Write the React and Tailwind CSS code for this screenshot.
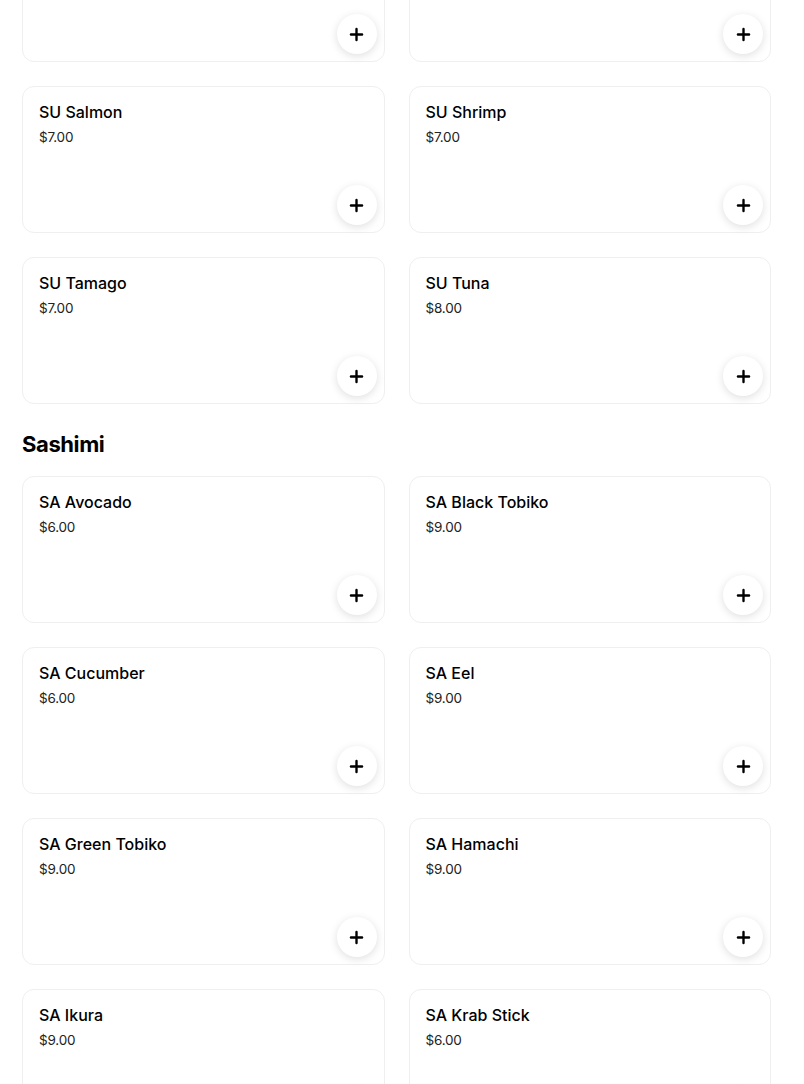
import { Plus } from 'lucide-react';

const sushi = [
    { name: 'SU Octopus', price: '$7.00' },
    { name: 'SU Red Tobiko', price: '$7.00' },
    { name: 'SU Salmon', price: '$7.00' },
    { name: 'SU Shrimp', price: '$7.00' },
    { name: 'SU Tamago', price: '$7.00' },
    { name: 'SU Tuna', price: '$8.00' },
];

const sashimi = [
    { name: 'SA Avocado', price: '$6.00' },
    { name: 'SA Black Tobiko', price: '$9.00' },
    { name: 'SA Cucumber', price: '$6.00' },
    { name: 'SA Eel', price: '$9.00' },
    { name: 'SA Green Tobiko', price: '$9.00' },
    { name: 'SA Hamachi', price: '$9.00' },
    { name: 'SA Ikura', price: '$9.00' },
    { name: 'SA Krab Stick', price: '$6.00' },
];

const ItemCard = ({ item }) => (
    <div className="h-[147px] flex flex-col rounded-xl border border-[#efefef] bg-white pl-4 pt-[15px] pr-[7px] pb-[7px]">
        <div className="text-[16px] leading-[20px] font-medium text-black">{item.name}</div>
        <div className="mt-[5px] text-[13.5px] leading-[20px] text-[#222] tracking-[-0.2px]">{item.price}</div>
        <button className="mt-auto self-end w-10 h-10 rounded-full bg-white flex items-center justify-center shadow-[0_2px_8px_rgba(0,0,0,0.13)]">
            <Plus size={19} strokeWidth={3} color="#000" />
        </button>
    </div>
);

const App = () => {
    return (
        <div className="bg-white min-h-screen overflow-hidden" style={{ fontFamily: 'Inter, "Liberation Sans", sans-serif' }}>
            <div className="pl-[22px] pr-[33px] -mt-[85px]">
                <div className="grid grid-cols-2 gap-6">
                    {sushi.map((item) => (
                        <ItemCard key={item.name} item={item} />
                    ))}
                </div>
                <h2 className="mt-6 mb-4 text-[22px] leading-[32px] font-bold text-black tracking-[-0.4px]">Sashimi</h2>
                <div className="grid grid-cols-2 gap-6 pb-10">
                    {sashimi.map((item) => (
                        <ItemCard key={item.name} item={item} />
                    ))}
                </div>
            </div>
        </div>
    );
};

export default App;
